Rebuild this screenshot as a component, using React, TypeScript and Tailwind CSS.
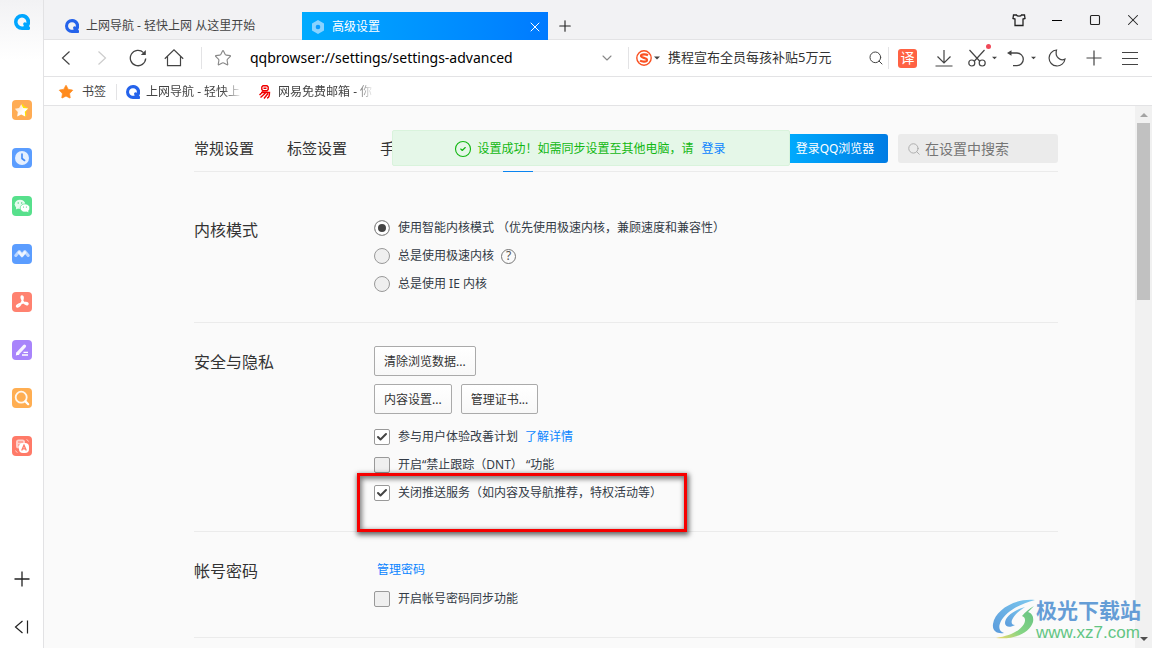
import React from "react";
import {
  Check,
  ChevronDown,
  CircleCheck,
  Plus,
  Search,
  Square,
  Star,
  X,
} from "lucide-react";

type IconProps = { className?: string };

const QLogo = ({ className }: IconProps) => (
  <svg viewBox="0 0 16 16" className={className} aria-hidden="true">
    <path
      fill="currentColor"
      fillRule="evenodd"
      d="M8 0a8 8 0 1 0 0 16h6.800c.8 0 1.200-.5 1.200-1.200v-1.300c0-.7-.4-1.100-1-1.300A8 8 0 0 0 8 0ZM8 3.600a4.400 4.400 0 0 1 4.300 5.300C11.500 8 10.200 8 9.500 9c-.6.9-.3 1.900.5 2.900A4.400 4.400 0 1 1 8 3.600Z"
    />
  </svg>
);

const Caret = ({ className }: IconProps) => (
  <svg viewBox="0 0 6 4" className={className} aria-hidden="true">
    <path d="M0 .5h6L3 3.500Z" fill="currentColor" />
  </svg>
);

const StarTile = () => (
  <svg viewBox="0 0 20 20" className="h-5 w-5">
    <defs>
      <linearGradient id="starFill" x1="0" y1="0" x2="1" y2="1">
        <stop offset="0" stopColor="#fff" stopOpacity=".55" />
        <stop offset=".6" stopColor="#fff" />
      </linearGradient>
    </defs>
    <rect width="20" height="20" rx="4" fill="#ffac54" />
    <path d="m10 3.500 2.500 3 3.500 1.500-2 4 .3 4.300L10 15Z" fill="#ffe600" />
    <path
      d="m9.200 4.300 2 3.700 5 .4-3.400 3.400.4 4.600-4-2-4 2.200.6-4.600-3-3.200 4.300-.8Z"
      fill="url(#starFill)"
    />
  </svg>
);

const ClockTile = () => (
  <svg viewBox="0 0 20 20" className="h-5 w-5">
    <rect width="20" height="20" rx="4" fill="#5b9dff" />
    <circle cx="10" cy="10" r="7" fill="#e6f0ff" />
    <path d="M10 6v4.500l2.600 2" stroke="#4289f5" strokeWidth="1.600" fill="none" strokeLinecap="round" />
  </svg>
);

const WechatTile = () => (
  <svg viewBox="0 0 20 20" className="h-5 w-5">
    <rect width="20" height="20" rx="4" fill="#57e08c" />
    <ellipse cx="8" cy="8.300" rx="5.300" ry="4.600" fill="#fff" opacity=".85" />
    <path d="m4.300 11-.4 2.600 2.600-1.300Z" fill="#fff" opacity=".85" />
    <ellipse cx="13" cy="12" rx="4.800" ry="4.100" fill="#fff" stroke="#57e08c" strokeWidth=".7" />
    <path d="m14.500 15 1.800 1.500-.1-2.600Z" fill="#fff" />
    <g fill="#45cc7b">
      <circle cx="6.200" cy="7" r=".7" />
      <circle cx="9.700" cy="7" r=".7" />
      <circle cx="11.500" cy="11" r=".6" />
      <circle cx="14.400" cy="11" r=".6" />
    </g>
  </svg>
);

const WaveTile = () => (
  <svg viewBox="0 0 20 20" className="h-5 w-5">
    <rect width="20" height="20" rx="4" fill="#5b9dff" />
    <path
      d="m3.800 11.500 3.400-4L10 11l2.800-3.500 3.400 4"
      stroke="#fff"
      strokeOpacity=".6"
      strokeWidth="3"
      strokeLinejoin="round"
      strokeLinecap="round"
      fill="none"
    />
    <path
      d="m7.200 8.500 2.800 3.500 2.800-3.500"
      stroke="#fff"
      strokeOpacity=".75"
      strokeWidth="2.800"
      strokeLinejoin="round"
      strokeLinecap="round"
      fill="none"
    />
  </svg>
);

const PdfTile = () => (
  <svg viewBox="0 0 20 20" className="h-5 w-5">
    <rect width="20" height="20" rx="4" fill="#ff8270" />
    <g fill="none" stroke="#fff" strokeWidth="1.700" strokeLinecap="round">
      <path d="M9.800 4.200c2 .1 1.200 3.200.2 5.500-1.200 2.700-3.200 5.400-4.700 5.200-1.500-.3-.3-2.600 4-3.700 3.200-.9 6.800-.8 6.600.8-.2 1.400-2.600.5-4-1.300-1.700-2-3.600-6.300-2.100-6.500Z" />
    </g>
  </svg>
);

const PenTile = () => (
  <svg viewBox="0 0 20 20" className="h-5 w-5">
    <rect width="20" height="20" rx="4" fill="#a884fb" />
    <path d="m6 13.200 6.500-7" stroke="#fff" strokeOpacity=".9" strokeWidth="3.200" strokeLinecap="round" />
    <path d="M3.800 15.500 4.500 12l3 2.600Z" fill="#fff" />
    <path d="M11.500 12.400h4.500M10 15h6" stroke="#fff" strokeWidth="1.300" />
  </svg>
);

const FindTile = () => (
  <svg viewBox="0 0 20 20" className="h-5 w-5">
    <rect width="20" height="20" rx="4" fill="#ffae52" />
    <circle cx="9.200" cy="9.200" r="5.500" fill="none" stroke="#fff" strokeOpacity=".9" strokeWidth="1.800" />
    <path d="m13.400 13.400 2.800 2.800" stroke="#fff" strokeWidth="2.200" strokeLinecap="round" />
  </svg>
);

const TranslateTile = () => (
  <svg viewBox="0 0 20 20" className="h-5 w-5">
    <rect width="20" height="20" rx="4" fill="#ff7a68" />
    <rect x="4" y="3.500" width="9" height="9" rx="2.500" fill="#fff" opacity=".65" />
    <path d="M6 6h5M6 9h3" stroke="#ff7a68" strokeWidth="1" />
    <rect x="7" y="7" width="10" height="10" rx="4" fill="#fff" />
    <path d="m9.700 14.500 2.300-5.300 2.300 5.300M10.600 12.900h2.800" stroke="#ff7a68" strokeWidth="1.300" fill="none" />
    <path d="M14.500 3.500c1 .4 1.600 1 2 2M3.500 14.500c.3 1 1 1.700 2 2" stroke="#fff" opacity=".6" fill="none" />
  </svg>
);

const sidebarApps = [
  { label: "收藏", icon: <StarTile /> },
  { label: "历史", icon: <ClockTile /> },
  { label: "微信", icon: <WechatTile /> },
  { label: "腾讯文档", icon: <WaveTile /> },
  { label: "PDF", icon: <PdfTile /> },
  { label: "笔记", icon: <PenTile /> },
  { label: "搜索", icon: <FindTile /> },
  { label: "翻译", icon: <TranslateTile /> },
];

const Sidebar = () => (
  <aside className="flex w-11 shrink-0 flex-col items-center border-r border-[#e2e2e4] bg-linear-to-b from-[#f2f2f4] to-white to-[60px] pt-[14px] pb-[11px]">
    <QLogo className="h-4 w-4 text-[#00a6ff]" />
    <nav className="mt-[70px] flex flex-col gap-7">
      {sidebarApps.map((app) => (
        <button key={app.label} type="button" aria-label={app.label} className="h-5 w-5">
          {app.icon}
        </button>
      ))}
    </nav>
    <div className="mt-auto flex flex-col items-center gap-7 text-[#222]">
      <button type="button" aria-label="添加">
        <svg viewBox="0 0 20 20" className="h-5 w-5" stroke="currentColor" strokeWidth="1.300">
          <path d="M10 2.500v15M2.500 10h15" />
        </svg>
      </button>
      <button type="button" aria-label="收起">
        <svg viewBox="0 0 20 20" className="h-5 w-5" fill="none" stroke="currentColor" strokeWidth="1.200">
          <path d="m10.500 4-7 6 7 6M15.500 3.500v13" />
        </svg>
      </button>
    </div>
  </aside>
);

const TabBar = () => (
  <header className="flex h-10 shrink-0 items-end border-b border-[#e3e3e5] bg-[#f2f2f4] pl-3">
    <div className="flex h-7 w-[246px] items-center gap-[7px] pt-[2px] pl-[9px] text-xs text-[#444]">
      <QLogo className="h-[14px] w-[14px] text-[#2563eb]" />
      <span className="whitespace-nowrap">上网导航 - 轻快上网 从这里开始</span>
    </div>
    <div className="-mb-px flex h-7 w-[246px] items-center gap-[7px] bg-linear-to-r from-[#00abff] to-[#007aff] pt-px pr-[5px] pl-[9px] text-xs text-white">
      <svg viewBox="0 0 14 14" className="h-[14px] w-[14px]">
        <path d="M7 0l6 3.500v7L7 14l-6-3.500v-7Z" fill="#8ad3ff" />
        <circle cx="7" cy="7" r="2.300" fill="#0b9bff" />
      </svg>
      <span className="flex-1">高级设置</span>
      <button type="button" aria-label="关闭标签">
        <X className="h-4 w-4" strokeWidth={1.5} />
      </button>
    </div>
    <button type="button" aria-label="新标签" className="mb-1 ml-2 text-[#222]">
      <Plus className="h-[18px] w-[18px]" strokeWidth={1.5} />
    </button>
    <div className="mb-[9px] ml-auto flex text-[#222]">
      <button type="button" aria-label="皮肤" className="flex h-5 w-[38px] items-center justify-center">
        <svg viewBox="0 0 14 14" className="h-[14px] w-[14px]" fill="none" stroke="currentColor" strokeWidth="1.300">
          <path d="M4.500 2h-3L1 5.500l2 .5v6.500h8V6l2-.5L12.500 2h-3C9 3.600 5 3.600 4.500 2Z" />
        </svg>
      </button>
      <button type="button" aria-label="最小化" className="flex h-5 w-[38px] items-center justify-center">
        <span className="h-px w-[10px] bg-black" />
      </button>
      <button type="button" aria-label="最大化" className="flex h-5 w-[38px] items-center justify-center">
        <Square className="h-3 w-3" strokeWidth={2.2} />
      </button>
      <button type="button" aria-label="关闭" className="flex h-5 w-[38px] items-center justify-center">
        <X className="h-[18px] w-[18px]" strokeWidth={1.4} />
      </button>
    </div>
  </header>
);

const Toolbar = () => (
  <div className="flex h-[37px] shrink-0 items-center border-b border-[#e3e3e5] bg-white pl-1 text-[#444]">
    <button type="button" aria-label="后退" className="flex w-9 justify-center">
      <svg viewBox="0 0 18 18" className="h-[18px] w-[18px]" fill="none" stroke="currentColor" strokeWidth="1.200">
        <path d="m12.500 2.500-7 6.500 7 6.500" />
      </svg>
    </button>
    <button type="button" aria-label="前进" className="flex w-9 justify-center text-[#ccc]">
      <svg viewBox="0 0 18 18" className="h-[18px] w-[18px]" fill="none" stroke="currentColor" strokeWidth="1.200">
        <path d="m5.500 2.500 7 6.500-7 6.500" />
      </svg>
    </button>
    <button type="button" aria-label="刷新" className="flex w-9 justify-center">
      <svg viewBox="0 0 18 18" className="h-[18px] w-[18px]" fill="none" stroke="currentColor" strokeWidth="1.300">
        <path d="M16.700 9.500A7.700 7.700 0 1 1 14.500 3.600" />
        <path d="M16.800 1v5h-5Z" fill="currentColor" stroke="none" />
      </svg>
    </button>
    <button type="button" aria-label="主页" className="flex w-9 justify-center">
      <svg viewBox="0 0 20 20" className="h-5 w-5" fill="none" stroke="currentColor" strokeWidth="1.200">
        <path d="m.8 10.800 9.200-9 9.200 9M3.500 8.500v9.200h13V8.500" />
      </svg>
    </button>
    <span className="ml-[9px] h-[22px] w-px bg-[#e3e3e5]" />
    <button type="button" aria-label="收藏" className="ml-3 text-[#888]">
      <Star className="h-[18px] w-[18px]" strokeWidth={1.5} />
    </button>
    <input
      aria-label="地址"
      defaultValue="qqbrowser://settings/settings-advanced"
      className="ml-[18px] min-w-0 flex-1 bg-transparent text-sm text-black outline-none"
    />
    <button type="button" aria-label="展开" className="mr-[13px] text-[#888]">
      <ChevronDown className="h-4 w-4" strokeWidth={1.6} />
    </button>
    <span className="h-[22px] w-px bg-[#e3e3e5]" />
    <button type="button" aria-label="搜索引擎" className="ml-[7px] flex items-center gap-[2px]">
      <svg viewBox="0 0 16 16" className="h-4 w-4" fill="none" stroke="#fa5122">
        <circle cx="8" cy="8" r="7.200" strokeWidth="1.400" />
        <path d="M12 5.200C10 4 5 4 5 6s6 1.700 6 3.900S6 12 4 10.700" strokeWidth="2.200" />
      </svg>
      <Caret className="h-1 w-[6px]" />
    </button>
    <input
      aria-label="搜索"
      defaultValue="携程宣布全员每孩补贴5万元"
      className="ml-2 w-[196px] bg-transparent text-[13px] text-[#333] outline-none"
    />
    <button type="button" aria-label="搜索按钮" className="flex w-6 justify-center">
      <Search className="h-4 w-4" strokeWidth={1.5} />
    </button>
    <span className="mr-[9px] h-[22px] w-px bg-[#e3e3e5]" />
    <button
      type="button"
      className="flex h-[19px] w-[19px] items-center justify-center rounded-[3px] bg-[#ff6243] text-sm text-white"
    >
      译
    </button>
    <button type="button" aria-label="下载" className="ml-[18px]">
      <svg viewBox="0 0 18 18" className="h-[18px] w-[18px]" fill="none" stroke="currentColor" strokeWidth="1.200">
        <path d="M9 1v13M2.500 7.500 9 14l6.500-6.500M.5 17h17" />
      </svg>
    </button>
    <button type="button" aria-label="截图" className="relative ml-[14px] flex items-center gap-[5px]">
      <svg viewBox="0 0 20 20" className="h-5 w-5" fill="none" stroke="currentColor" strokeWidth="1.200">
        <path d="M2.500 2 13 13.500M17.500 2 7 13.500" />
        <circle cx="4.800" cy="15" r="3" />
        <circle cx="15.200" cy="15" r="3" />
      </svg>
      <Caret className="h-1 w-[5px]" />
      <span className="absolute -top-1 right-[6px] h-[5px] w-[5px] rounded-full bg-[#f04858]" />
    </button>
    <button type="button" aria-label="恢复" className="ml-[10px] flex items-center gap-[6px]">
      <svg viewBox="0 0 18 18" className="h-[18px] w-[18px]" fill="none" stroke="currentColor" strokeWidth="1.300">
        <path d="M3 4h7a6.300 6.300 0 0 1 0 12.600H6" />
        <path d="M0 4l4.500-2.800v5.600Z" fill="currentColor" stroke="none" />
      </svg>
      <Caret className="h-1 w-[5px]" />
    </button>
    <button type="button" aria-label="夜间模式" className="ml-3">
      <svg viewBox="0 0 18 18" className="h-[18px] w-[18px]" fill="none" stroke="currentColor" strokeWidth="1.200">
        <path d="M8.500 1A8 8 0 1 0 17 10c-4.500 2.500-10.500-2-8.500-9Z" />
      </svg>
    </button>
    <button type="button" aria-label="添加插件" className="ml-[19px]">
      <svg viewBox="0 0 18 18" className="h-[18px] w-[18px]" stroke="currentColor" strokeWidth="1.200">
        <path d="M9 1.500v15M1.500 9h15" />
      </svg>
    </button>
    <button type="button" aria-label="菜单" className="mr-[13px] ml-[18px]">
      <svg viewBox="0 0 18 18" className="h-[18px] w-[18px]" stroke="currentColor" strokeWidth="1.200">
        <path d="M1 3.500h16M1 9.500h16M1 15.500h16" />
      </svg>
    </button>
  </div>
);

const BookmarksBar = () => (
  <div className="flex h-[29px] shrink-0 items-center border-b border-[#e3e3e5] bg-white pt-px pl-[14px] text-xs text-[#444]">
    <a href="#bookmarks" className="flex items-center gap-2">
      <Star className="h-4 w-4 fill-[#ff8a1c] text-[#ff8a1c]" strokeWidth={1} />
      书签
    </a>
    <span className="ml-[10px] h-4 w-px bg-[#e3e3e5]" />
    <a href="#nav" className="ml-[9px] flex items-center gap-[6px]">
      <QLogo className="h-[14px] w-[14px] text-[#2563eb]" />
      <span className="w-24 overflow-hidden mask-r-from-80% whitespace-nowrap">上网导航 - 轻快上</span>
    </a>
    <a href="#mail" className="ml-4 flex items-center gap-[6px]">
      <svg viewBox="0 0 14 14" className="h-[14px] w-[14px]" fill="none" stroke="#f00000" strokeWidth="1.400">
        <path d="M5 .8h4l1.200 1.200v2.500L9 5.700H5L3.800 4.500V2ZM5.500 3.200h3M3 7.500h8.500c0 3.500-.5 5.500-2.500 5.500M5 6.500 1.500 10M7.500 8 2.500 12.500M10 8.500 6 13.500" />
      </svg>
      <span className="w-24 overflow-hidden mask-r-from-80% whitespace-nowrap">网易免费邮箱 - 你</span>
    </a>
  </div>
);

type ChoiceProps = {
  id: string;
  type: "radio" | "checkbox";
  name?: string;
  label: string;
  checked?: boolean;
  children?: React.ReactNode;
};

const Choice = ({ id, type, name, label, checked, children }: ChoiceProps) => (
  <div className="relative flex h-7 items-center text-xs text-[#333b46]">
    <span className="relative mr-2 h-4 w-4">
      <input
        id={id}
        type={type}
        name={name}
        defaultChecked={checked}
        className={
          type === "radio"
            ? "block h-4 w-4 appearance-none rounded-full border border-[#999] bg-[#efefef] checked:bg-[#444] checked:shadow-[inset_0_0_0_3px_white]"
            : "block h-4 w-4 appearance-none rounded-xs border border-[#999] bg-[#efefef] checked:bg-white"
        }
      />
      {type === "checkbox" && checked && (
        <Check className="pointer-events-none absolute inset-[2px] h-3 w-3 text-[#444]" strokeWidth={4} />
      )}
    </span>
    <label htmlFor={id} className="whitespace-nowrap">
      {label}
    </label>
    {children}
  </div>
);

const SettingsButton = ({ text }: { text: string }) => (
  <button
    type="button"
    className="h-[30px] rounded-xs border border-[#aaa] bg-linear-to-b from-white to-[#f8f8f8] px-[9px] pt-px text-xs text-[#333]"
  >
    {text}
  </button>
);

const SettingsHeader = () => (
  <div className="relative flex h-[66px] items-center border-b border-[#ebebeb] pt-5">
    <nav className="flex gap-[33px] self-stretch text-[15px] whitespace-nowrap text-[#333]">
      <a href="#general" className="pt-[11px]">
        常规设置
      </a>
      <a href="#tabs" className="pt-[11px]">
        标签设置
      </a>
      <a href="#gestures" aria-label="手势与快捷键" className="w-[90px] pt-[11px]">
        手
      </a>
      <a href="#advanced" aria-label="高级" aria-current="page" className="-mb-px w-[30px] border-b border-[#0a84f0]" />
    </nav>
    <button
      type="button"
      className="mr-[10px] ml-auto h-[29px] w-[106px] rounded-[3px] bg-linear-to-r from-[#00adff] to-[#007ce4] text-xs whitespace-nowrap text-white"
    >
      登录QQ浏览器
    </button>
    <label className="flex h-[29px] w-40 items-center gap-1 rounded-[3px] bg-[#ebebeb] pl-[9px]">
      <Search className="h-[14px] w-[14px] shrink-0 text-[#aaa]" strokeWidth={1.6} />
      <input
        aria-label="在设置中搜索"
        placeholder="在设置中搜索"
        className="w-full min-w-0 bg-transparent text-sm outline-none placeholder:text-[#757575]"
      />
    </label>
    <div
      role="status"
      className="absolute top-6 right-[268px] left-[198px] flex h-9 items-center justify-center rounded-xs border border-[#d9f3dc] bg-[#e5f7e8] pt-px pr-[2px] text-xs whitespace-nowrap text-[#12b712]"
    >
      <CircleCheck className="mr-[5px] h-[18px] w-[18px]" strokeWidth={1.5} />
      设置成功！如需同步设置至其他电脑，请
      <a href="#login" className="ml-2 text-[#0a84ff]">
        登录
      </a>
    </div>
  </div>
);

type SectionProps = { title: string; className: string; children: React.ReactNode };

const Section = ({ title, className, children }: SectionProps) => (
  <section className={`flex border-b border-[#ebebeb] pb-6 ${className}`}>
    <h2 className="w-[180px] shrink-0 text-base leading-8 text-[#333]">{title}</h2>
    <div>{children}</div>
  </section>
);

const Settings = () => (
  <main className="min-w-0 flex-1 overflow-hidden pr-[77px] pl-[150px]">
    <SettingsHeader />
    <Section title="内核模式" className="pt-[42px]">
      <Choice id="smart" type="radio" name="core" checked label="使用智能内核模式 （优先使用极速内核，兼顾速度和兼容性）" />
      <Choice id="fast" type="radio" name="core" label="总是使用极速内核">
        <button
          type="button"
          aria-label="帮助"
          className="ml-[7px] flex h-[15px] w-[15px] items-center justify-center rounded-full border border-[#777] text-xs text-[#555]"
        >
          ?
        </button>
      </Choice>
      <Choice id="ie" type="radio" name="core" label="总是使用 IE 内核" />
    </Section>
    <Section title="安全与隐私" className="pt-[23px]">
      <div className="flex flex-col gap-2">
        <div className="flex">
          <SettingsButton text="清除浏览数据..." />
        </div>
        <div className="flex gap-[9px]">
          <SettingsButton text="内容设置..." />
          <SettingsButton text="管理证书..." />
        </div>
      </div>
      <div className="mt-[9px]">
        <Choice id="improve" type="checkbox" checked label="参与用户体验改善计划">
          <a href="#details" className="ml-[7px] text-[#0a84ff]">
            了解详情
          </a>
        </Choice>
        <Choice id="dnt" type="checkbox" label="开启“禁止跟踪（DNT） “功能" />
        <Choice id="push" type="checkbox" checked label="关闭推送服务（如内容及导航推荐，特权活动等）">
          <span className="pointer-events-none absolute -top-[6px] -left-[17px] h-[59px] w-[330px] border-3 border-[#f60000] shadow-[1px_2px_5px_1px_rgba(0,0,0,0.6),inset_1px_2px_5px_1px_rgba(0,0,0,0.5)]" />
        </Choice>
      </div>
    </Section>
    <Section title="帐号密码" className="pt-[23px]">
      <a href="#passwords" className="ml-[3px] flex h-[30px] items-center text-xs text-[#0a84ff]">
        管理密码
      </a>
      <Choice id="sync" type="checkbox" label="开启帐号密码同步功能" />
    </Section>
  </main>
);

const Scrollbar = () => (
  <div className="flex w-[17px] shrink-0 flex-col items-center bg-[#f1f1f1] py-[6px]">
    <Caret className="h-[6px] w-2 rotate-180 text-[#a3a3a3]" />
    <div className="mt-[5px] h-[177px] w-[13px] bg-[#c1c1c1]" />
    <Caret className="mt-auto h-[6px] w-2 text-[#505050]" />
  </div>
);

const Watermark = () => (
  <div className="absolute right-[11px] bottom-[5px] flex items-center">
    <svg viewBox="0 0 44 42" className="h-[42px] w-11">
      <defs>
        <linearGradient id="markBlue" x1="0" y1="1" x2="1" y2="0">
          <stop offset="0" stopColor="#5b9bdc" />
          <stop offset="1" stopColor="#7cc8ee" />
        </linearGradient>
        <linearGradient id="markGreen" x1="0" y1="1" x2="1" y2="0">
          <stop offset="0" stopColor="#f2d76a" />
          <stop offset=".4" stopColor="#86d584" />
          <stop offset="1" stopColor="#62c083" />
        </linearGradient>
      </defs>
      <path
        d="M43 1C23-1 3 11 1 25c-1 7 4 10 11 9-5-2-6-6-3-12C14 13 27 5 43 1Z"
        fill="url(#markBlue)"
      />
      <path
        d="M33 8c-11 3-20 10-20 16 0 4 5 5 10 2-3 0-4-2-3-5 2-5 7-9 13-13Z"
        fill="url(#markBlue)"
      />
      <path
        d="M42 7c-5 3-9 6-12 10 3 1 4 4 2 8-4 7-14 12-28 14 20 2 34-6 37-16 1-5-1-9-5-10Z"
        fill="url(#markGreen)"
      />
    </svg>
    <div>
      <p className="text-[21px] leading-[26px] font-bold text-[#659dd6]">极光下载站</p>
      <p className="font-['Liberation_Sans'] text-[17px] leading-5 text-[#62c583]">www.xz7.com</p>
    </div>
  </div>
);

export default function App() {
  return (
    <div className="relative flex h-screen overflow-hidden bg-white font-['Noto_Sans','Noto_Sans_CJK_SC',sans-serif]">
      <Sidebar />
      <div className="flex min-w-0 flex-1 flex-col">
        <TabBar />
        <Toolbar />
        <BookmarksBar />
        <div className="flex min-h-0 flex-1 bg-[#fafafa]">
          <Settings />
          <Scrollbar />
        </div>
      </div>
      <Watermark />
    </div>
  );
}
